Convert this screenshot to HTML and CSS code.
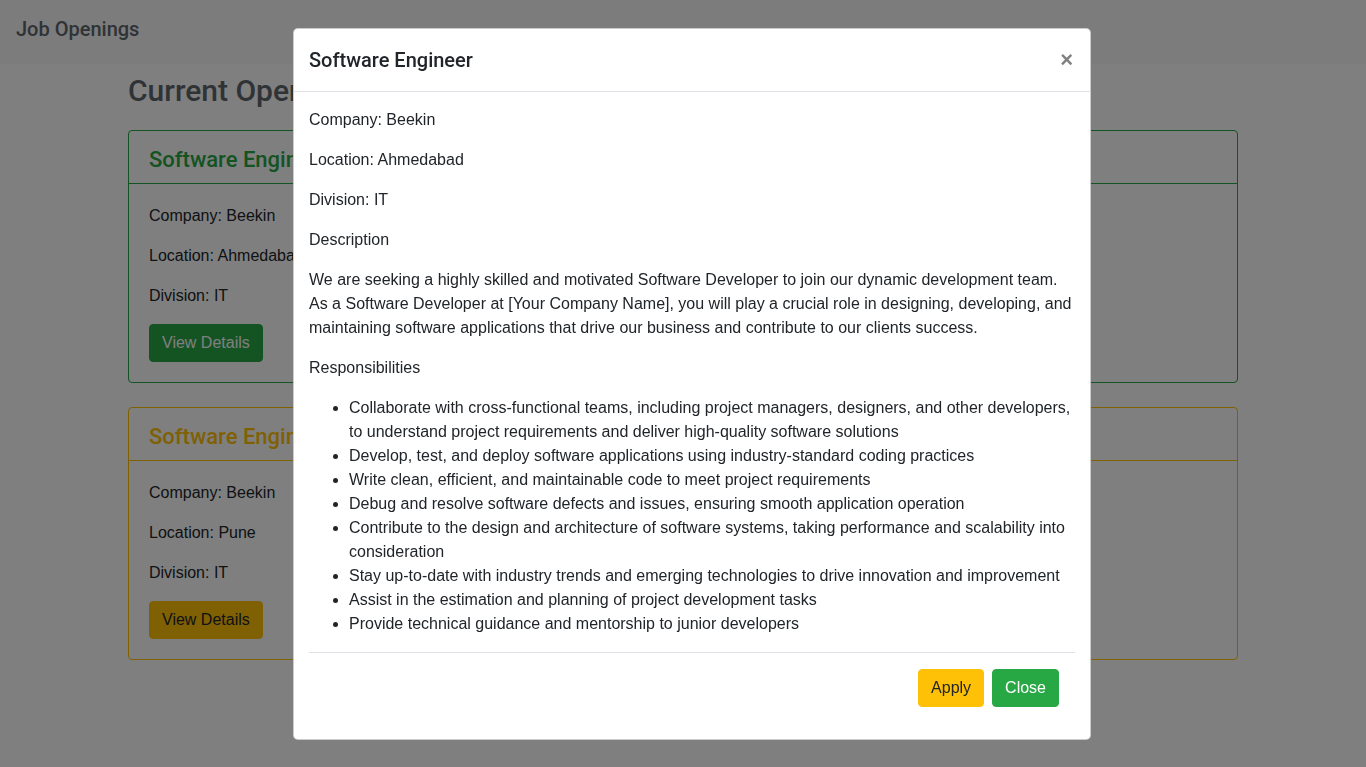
FILE: index.html
```html
<!DOCTYPE html>
<html lang="en">
<head>
<meta charset="utf-8">
<title>Job Openings</title>
<link rel="stylesheet" href="styles.css">
</head>
<body>
<nav class="navbar"><span class="brand">Job Openings</span></nav>
<main class="container">
  <h2 class="page-title">Current Openings</h2>
  <div class="card card-success">
    <div class="card-header"><h3 class="card-title">Software Engineer</h3></div>
    <div class="card-body">
      <p>Company: Beekin</p>
      <p>Location: Ahmedabad</p>
      <p>Division: IT</p>
      <button class="btn btn-success">View Details</button>
    </div>
  </div>
  <div class="card card-warning">
    <div class="card-header"><h3 class="card-title">Software Engineer</h3></div>
    <div class="card-body">
      <p>Company: Beekin</p>
      <p>Location: Pune</p>
      <p>Division: IT</p>
      <button class="btn btn-warning">View Details</button>
    </div>
  </div>
</main>
<div class="backdrop"></div>
<div class="modal">
  <div class="modal-dialog">
    <div class="modal-header">
      <h5 class="modal-title">Software Engineer</h5>
      <button class="close" aria-label="Close">×</button>
    </div>
    <div class="modal-body">
      <p>Company: Beekin</p>
      <p>Location: Ahmedabad</p>
      <p>Division: IT</p>
      <p>Description</p>
      <p>We are seeking a highly skilled and motivated Software Developer to join our dynamic development team. As a Software Developer at [Your Company Name], you will play a crucial role in designing, developing, and maintaining software applications that drive our business and contribute to our clients success.</p>
      <p>Responsibilities</p>
      <ul>
        <li>Collaborate with cross-functional teams, including project managers, designers, and other developers, to understand project requirements and deliver high-quality software solutions</li>
        <li>Develop, test, and deploy software applications using industry-standard coding practices</li>
        <li>Write clean, efficient, and maintainable code to meet project requirements</li>
        <li>Debug and resolve software defects and issues, ensuring smooth application operation</li>
        <li>Contribute to the design and architecture of software systems, taking performance and scalability into consideration</li>
        <li>Stay up-to-date with industry trends and emerging technologies to drive innovation and improvement</li>
        <li>Assist in the estimation and planning of project development tasks</li>
        <li>Provide technical guidance and mentorship to junior developers</li>
      </ul>
      <div class="modal-footer">
        <button class="btn btn-warning">Apply</button>
        <button class="btn btn-success">Close</button>
      </div>
    </div>
  </div>
</div>
</body>
</html>
```
FILE: styles.css
```css
* { box-sizing: border-box; }
html, body { margin: 0; padding: 0; }
body {
  font-family: "Liberation Sans", Arial, sans-serif;
  font-size: 16px;
  line-height: 1.5;
  color: #212529;
  background: #fff;
  overflow: hidden;
}
p { margin: 0 0 16px; }

.navbar {
  height: 64px;
  background: #f8f9fa;
  padding: 14px 16px 0;
}
.brand {
  display: inline-block;
  font-family: Roboto, "Liberation Sans", sans-serif;
  font-size: 20px;
  line-height: 30px;
  font-weight: 500;
  color: #5f666d;
}

.container {
  width: 1140px;
  margin: 0 auto;
  padding: 0 15px;
}
.page-title {
  font-family: Roboto, "Liberation Sans", sans-serif;
  font-size: 30px;
  font-weight: 500;
  line-height: 36px;
  margin: 9px 0 21px;
  color: #5f666d;
}

.card {
  border: 1px solid;
  border-radius: 4px;
  margin-bottom: 24px;
}
.card-success { border-color: #28a745; }
.card-warning { border-color: #ffc107; }
.card-header {
  padding: 15px 20px 9px;
  border-bottom: 1px solid;
}
.card-success .card-header { border-color: #28a745; }
.card-warning .card-header { border-color: #ffc107; }
.card-title {
  margin: 0;
  font-family: Roboto, "Liberation Sans", sans-serif;
  font-size: 22px;
  font-weight: 500;
  line-height: 28px;
}
.card-success .card-title { color: #28a745; }
.card-warning .card-title { color: #ffc107; }
.card-body { padding: 20px; }

.btn {
  font-family: inherit;
  font-size: 16px;
  line-height: 24px;
  padding: 6px 12px;
  border: 1px solid transparent;
  border-radius: 4px;
  cursor: pointer;
}
.btn-success { background: #28a745; border-color: #28a745; color: #fff; }
.btn-warning { background: #ffc107; border-color: #ffc107; color: #212529; }

.backdrop {
  position: fixed;
  inset: 0;
  background: rgba(0,0,0,.5);
}
.modal {
  position: fixed;
  inset: 0;
}
.modal-dialog {
  width: 798px;
  margin: 28px 0 0 293px;
  background: #fff;
  border: 1px solid rgba(0,0,0,.2);
  border-radius: 5px;
}
.modal-header {
  display: flex;
  align-items: flex-start;
  justify-content: space-between;
  padding: 16px 17px 16px 15px;
  border-bottom: 1px solid #dee2e6;
}
.modal-title {
  margin: 0;
  font-family: Roboto, "Liberation Sans", sans-serif;
  font-size: 20px;
  font-weight: 500;
  line-height: 30px;
}
.close {
  background: none;
  border: 0;
  padding: 0;
  font-family: "Liberation Sans", Arial, sans-serif;
  font-size: 22px;
  font-weight: 700;
  line-height: 30px;
  color: #000;
  opacity: .5;
  cursor: pointer;
}
.modal-body {
  padding: 16px 15px;
}
.modal-body ul {
  margin: 0 0 16px;
  padding-left: 40px;
}
.modal-footer {
  display: flex;
  justify-content: flex-end;
  padding: 12px;
  border-top: 1px solid #dee2e6;
}
.modal-footer .btn { margin: 4px; }
```
